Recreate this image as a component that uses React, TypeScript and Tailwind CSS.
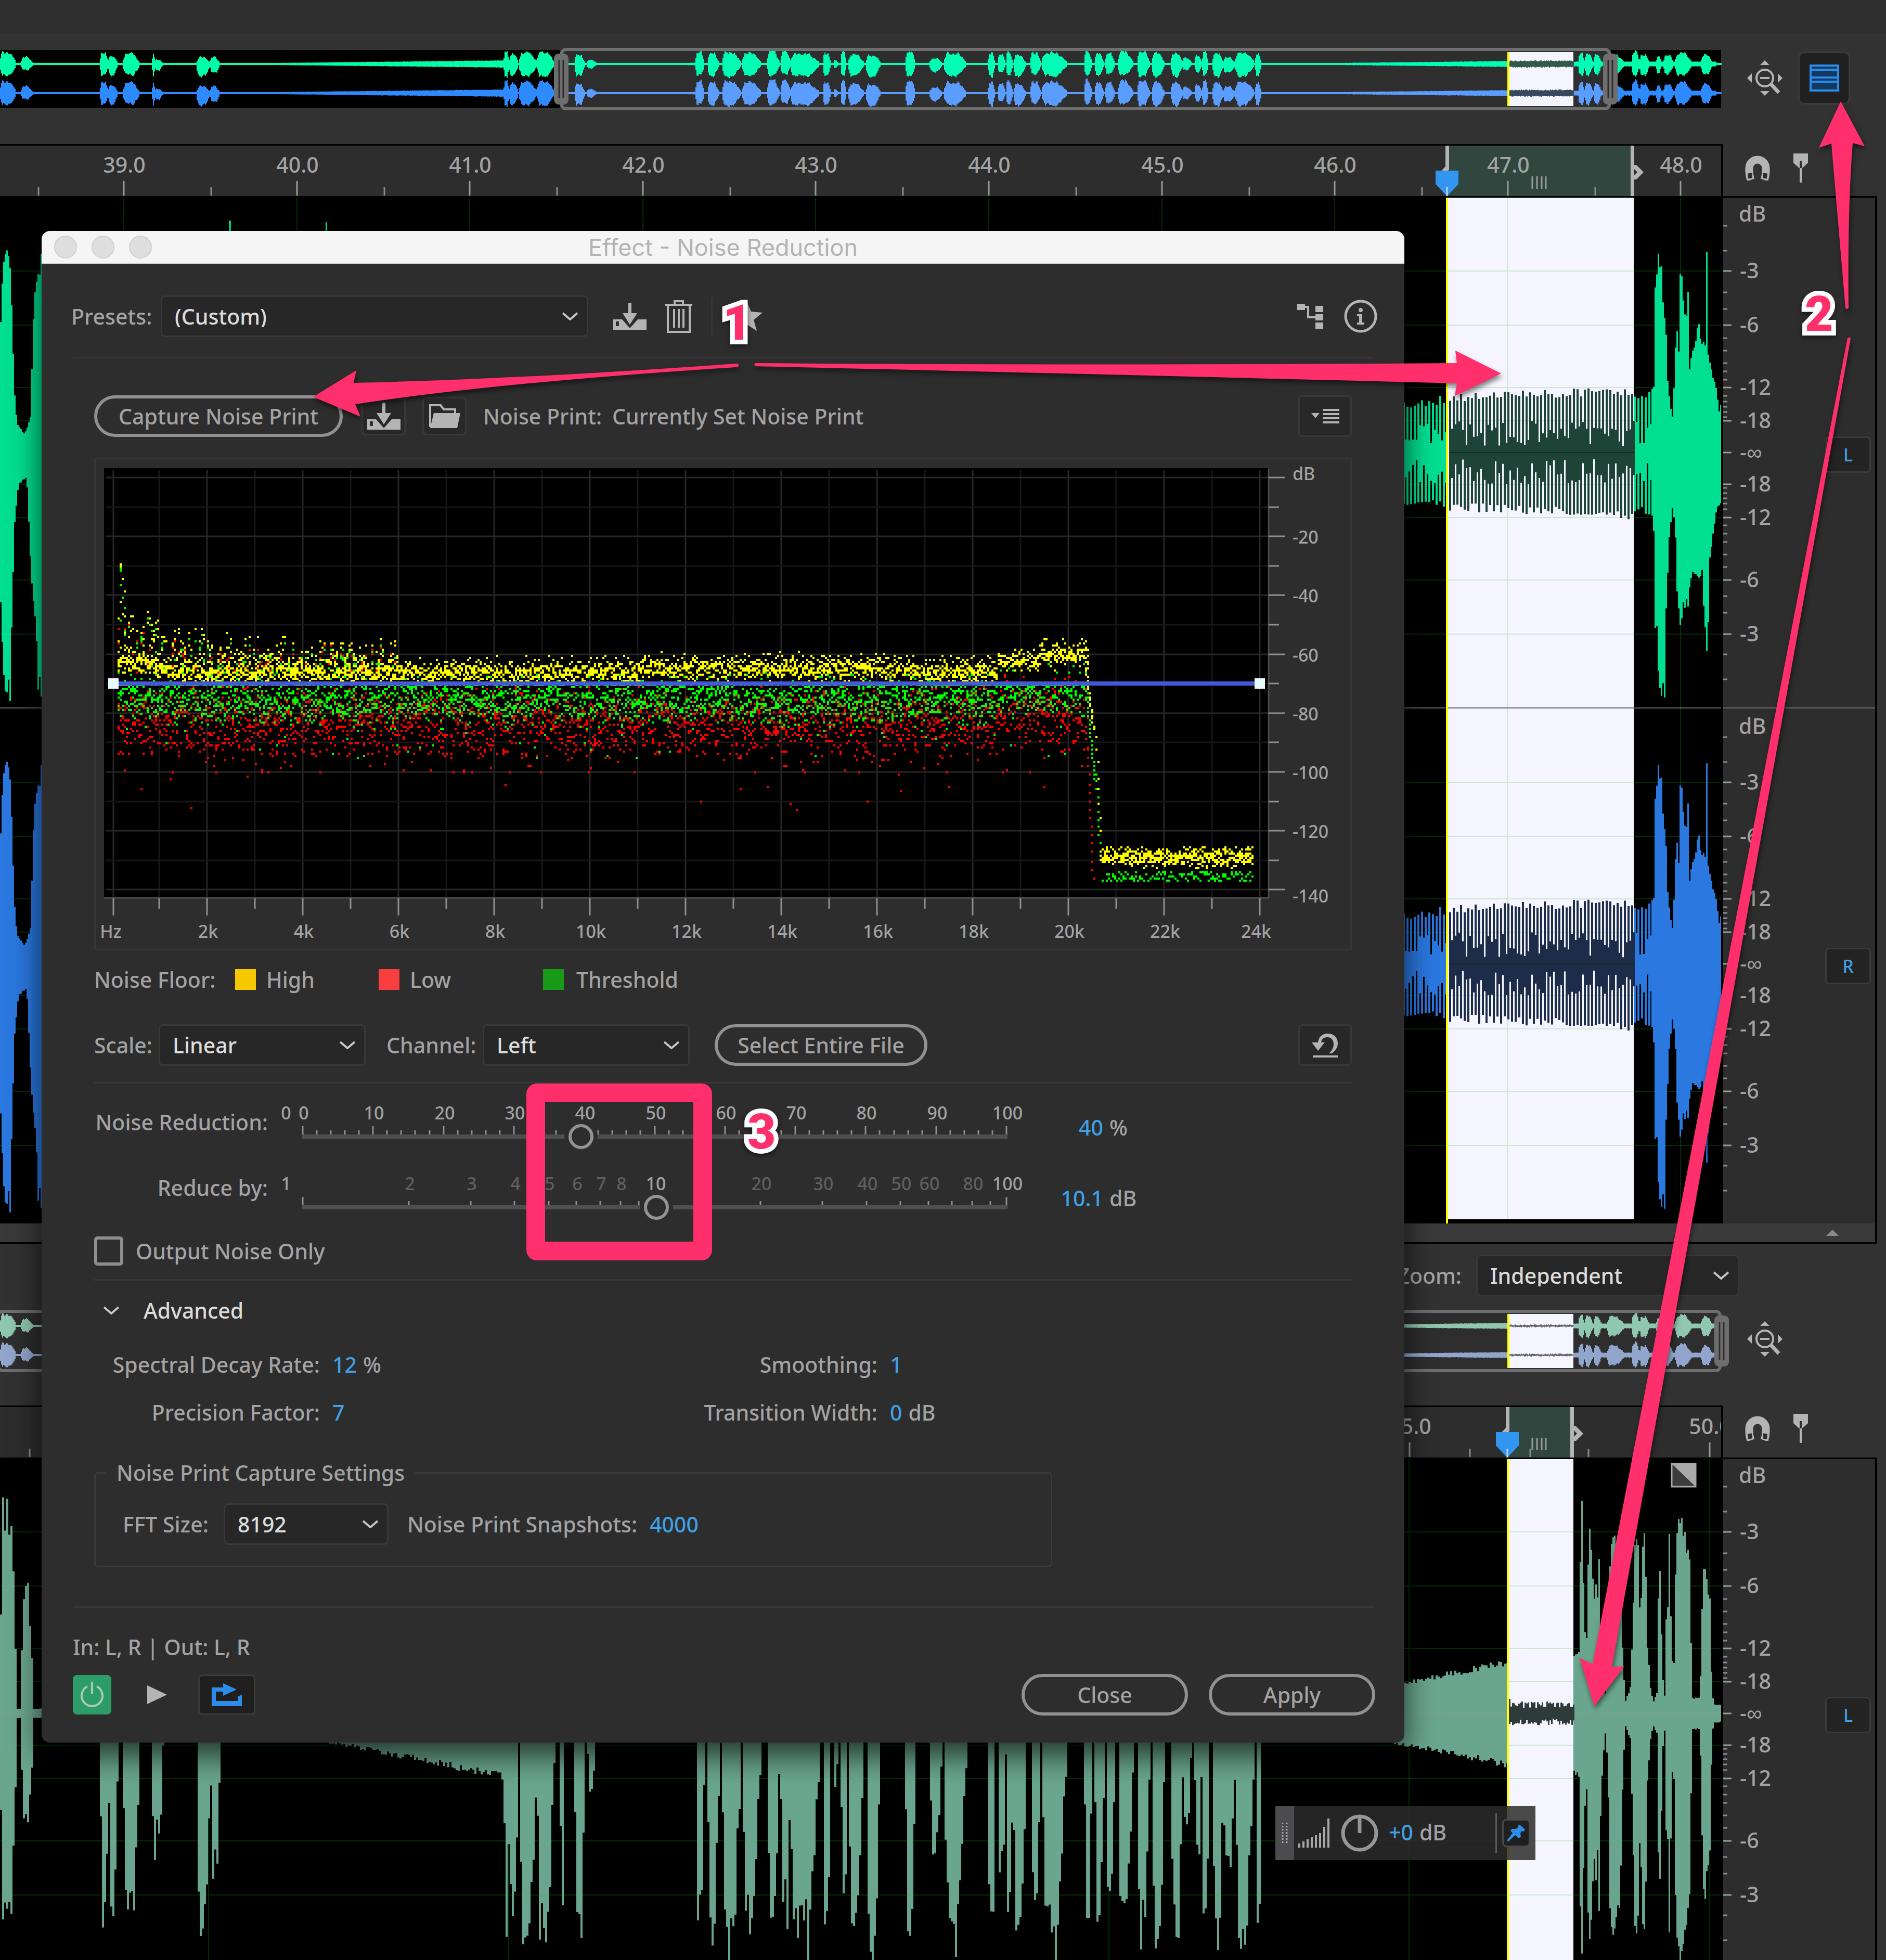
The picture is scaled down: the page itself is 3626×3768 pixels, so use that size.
// Audio editor workspace with the Noise Reduction effect window and the tutorial callouts on top.
import React, { useState } from "react";

type Burst = [number, number, number, number]; // start, end, up, down
type Column = [number, number, number, number]; // x, width, up, down
type Point = [number, number];

// Small seeded generator so the waveforms look the same on every render.
function createRandom(seed: number) {
  let s = seed;
  return () => {
    s = (s * 1664525 + 1013904223) % 4294967296;
    return s / 4294967296;
  };
}

// Phrases of the recording, in timeline pixels, with their peak level above and below the centre.
const bursts: Burst[] = [
  [0, 30, 0.95, 0.95], [40, 63, 0.55, 0.5], [192, 208, 0.9, 0.95], [208, 225, 0.65, 0.9], [236, 268, 0.85, 0.9],
  [292, 297, 0.85, 0.95], [297, 313, 0.35, 0.5], [378, 404, 0.55, 0.98], [404, 422, 0.55, 0.7], [968, 978, 1, 0.98],
  [978, 996, 0.8, 0.95], [998, 1032, 0.92, 0.95], [1032, 1065, 0.95, 0.98], [1076, 1083, 0.95, 0.95],
  [1104, 1124, 0.75, 0.98], [1128, 1146, 0.35, 0.35], [1337, 1353, 1, 0.95], [1360, 1382, 0.85, 0.95],
  [1388, 1424, 0.9, 0.98], [1427, 1462, 0.88, 0.88], [1475, 1498, 1, 0.9], [1500, 1520, 1, 0.85],
  [1519, 1575, 0.8, 0.98], [1582, 1596, 0.9, 0.95], [1602, 1611, 0.3, 0.3], [1616, 1627, 0.95, 0.98],
  [1631, 1660, 0.75, 0.9], [1665, 1692, 0.7, 0.98], [1740, 1759, 1, 0.95], [1787, 1811, 0.45, 0.6],
  [1815, 1857, 0.85, 0.95], [1899, 1912, 0.9, 0.98], [1918, 1933, 0.8, 0.7], [1934, 1946, 0.95, 0.9],
  [1948, 1972, 0.7, 0.95], [1981, 2000, 0.95, 0.8], [2003, 2050, 0.9, 0.98], [2084, 2098, 1, 0.95],
  [2104, 2122, 0.8, 0.85], [2125, 2142, 0.85, 0.85], [2149, 2178, 1, 0.9], [2186, 2210, 1, 0.98],
  [2214, 2238, 0.85, 0.98], [2251, 2273, 0.9, 0.98], [2273, 2290, 0.5, 0.5], [2296, 2310, 0.7, 0.6],
  [2311, 2323, 0.95, 0.95], [2331, 2351, 0.85, 0.98], [2351, 2375, 0.5, 0.7], [2375, 2411, 0.9, 0.95],
  [2413, 2424, 0.9, 0.95], [3034, 3046, 0.85, 0.98], [3046, 3062, 0.8, 0.85], [3064, 3078, 0.8, 0.9],
  [3090, 3122, 0.75, 0.8], [3137, 3152, 0.98, 0.98], [3152, 3170, 0.75, 0.9], [3184, 3194, 0.6, 0.8],
  [3198, 3216, 0.7, 0.75], [3220, 3252, 0.88, 0.95], [3270, 3292, 0.75, 0.8],
];

function levelAt(x: number): [number, number] {
  const hit = bursts.find(([a, b]) => x >= a && x < b);
  if (hit) {
    const t = (x - hit[0]) / (hit[1] - hit[0]);
    const taper = Math.min(1, 0.5 + t * 4, 0.2 + (1 - t) * 2);
    const sway = 0.88 + 0.12 * Math.sin(x * 0.47) * Math.sin(x * 0.19 + 1);
    const drift = 0.88 + 0.12 * Math.sin(x * 0.39 + 2) * Math.sin(x * 0.23);
    return [hit[2] * taper * sway * 1.06, hit[3] * taper * drift * 1.06];
  }
  if (x > 422 && x < 968) return [0.03 + ((x - 422) / 546) * 0.24, 0.03 + ((x - 422) / 546) * 0.24];
  if (x > 1240 && x < 1337) return [0.1 * ((x - 1240) / 97), 0.1 * ((x - 1240) / 97)];
  if (x > 2440 && x < 2900) return [0.02 + ((x - 2440) / 460) * 0.2, 0.02 + ((x - 2440) / 460) * 0.2];
  if (x >= 3025 && x < 3300) return [0.18, 0.18];
  return [0.02, 0.02];
}

function toPath(mid: number, columns: Column[]) {
  return columns
    .map(([x, w, up, down]) => `M${x} ${(mid - up).toFixed(1)}h${w}V${(mid + down).toFixed(1)}h${-w}z`)
    .join("");
}

function phraseColumns(from: number, to: number, scale: number, step: number, seed: number) {
  const rand = createRandom(seed);
  const columns: Column[] = [];
  for (let x = from; x < to; x += step) {
    const [up, down] = levelAt(x);
    const k = 0.86 + rand() * 0.14;
    const d = 0.86 + rand() * 0.14;
    columns.push([x, step, Math.max(2, up * k * scale), Math.max(2, down * d * scale)]);
  }
  return columns;
}

function flatColumns(from: number, to: number, level: number, spread: number, step: number, seed: number) {
  const rand = createRandom(seed);
  const columns: Column[] = [];
  for (let x = from; x < to; x += step) {
    columns.push([x, step, level + rand() * spread, level + rand() * spread]);
  }
  return columns;
}

// Steady hum: narrow teeth with a solid core between them.
function toothColumns(from: number, to: number, start: number, end: number, seed: number) {
  const rand = createRandom(seed);
  const columns: Column[] = [];
  for (let x = from; x < to; x += 7) {
    const level = start + ((end - start) * (x - from)) / (to - from);
    columns.push([x, 4, level + rand() * 18 - 9, level + rand() * 18 - 9]);
    columns.push([x + 4, 3, 12 + rand() * 50, 12 + rand() * 50]);
  }
  return columns;
}

function profileColumns(up: Point[], down: Point[], seed: number, step = 3) {
  const rand = createRandom(seed);
  const at = (pts: Point[], x: number) => {
    const i = pts.findIndex((p) => p[0] > x);
    if (i < 1) return pts[i === 0 ? 0 : pts.length - 1][1];
    const [x0, y0] = pts[i - 1];
    const [x1, y1] = pts[i];
    return y0 + ((y1 - y0) * (x - x0)) / (x1 - x0);
  };
  const columns: Column[] = [];
  for (let x = up[0][0]; x < up[up.length - 1][0]; x += step) {
    columns.push([x, step, at(up, x) * (0.94 + rand() * 0.1), at(down, x) * (0.94 + rand() * 0.1)]);
  }
  return columns;
}

const speechUp: Point[] = [
  [3175, 127], [3178, 130], [3180, 323], [3184, 330], [3186, 401], [3189, 388], [3194, 334], [3199, 253], [3202, 230],
  [3205, 144], [3209, 98], [3214, 72], [3217, 127], [3219, 127], [3221, 293], [3225, 184], [3227, 200], [3228, 325],
  [3231, 365], [3235, 311], [3239, 247], [3244, 302], [3247, 164], [3252, 202], [3258, 207], [3263, 257],
  [3269, 224], [3274, 207], [3278, 220], [3279, 371], [3281, 371], [3283, 184], [3289, 161], [3294, 144],
  [3300, 110], [3304, 78], [3309, 101],
];
const speechDown: Point[] = [
  [3175, 120], [3179, 160], [3181, 330], [3185, 345], [3187, 440], [3190, 470], [3199, 465], [3202, 300], [3207, 180],
  [3214, 110], [3219, 130], [3222, 250], [3229, 340], [3237, 290], [3244, 300], [3252, 230], [3262, 230],
  [3272, 240], [3278, 370], [3282, 380], [3286, 210], [3297, 120], [3309, 90],
];
const openingUp: Point[] = [
  [0, 260], [4, 365], [12, 405], [18, 372], [26, 120], [32, 55], [46, 35], [58, 70], [62, 250], [68, 330], [81, 380],
];
const openingDown: Point[] = [
  [0, 300], [6, 440], [18, 465], [26, 150], [34, 60], [50, 50], [58, 220], [66, 330], [72, 440], [81, 465],
];
const tailUp: Point[] = [
  [3025, 114], [3035, 119], [3037, 300], [3040, 402], [3043, 245], [3047, 128], [3050, 150], [3052, 297], [3055, 365],
  [3059, 301], [3063, 203], [3067, 259], [3070, 220], [3072, 371], [3075, 189], [3080, 95], [3085, 39], [3090, 105],
  [3095, 342], [3103, 343], [3114, 283], [3119, 95], [3124, 25], [3133, 49], [3138, 180], [3142, 339], [3147, 367],
  [3151, 198], [3156, 250], [3158, 418], [3162, 300], [3166, 133], [3172, 49], [3177, 22], [3184, 39], [3187, 226],
  [3190, 269], [3195, 77], [3199, 35], [3201, 170], [3205, 198], [3208, 334], [3211, 198], [3216, 30], [3219, 245],
  [3224, 398], [3233, 362], [3240, 329], [3247, 287], [3252, 30], [3267, 30], [3271, 198], [3275, 312], [3280, 255],
  [3286, 217], [3290, 39], [3294, 18], [3309, 16],
];
const tailDown: Point[] = tailUp.map(([x, v]) => [x, v > 150 ? Math.min(474, v * 1.25) : v]);

const overview = [
  { from: 0, to: 1077, seed: 3 },
  { from: 1077, to: 3084, seed: 5 },
  { from: 3084, to: 3309, seed: 7 },
];

function Overview({ muted }: { muted?: boolean }) {
  const frame = muted ? { x: -6, w: 3316, handle: 3296 } : { x: 1077, w: 2020, handle: 3082 };
  const green = muted ? ["#8fc7b0", "#8fc7b0", "#8fc7b0"] : ["#00ffaa", "#00ffb4", "#00ffaa"];
  const blue = muted ? ["#92a5cc", "#92a5cc", "#92a5cc"] : ["#2e8bff", "#5a9dff", "#2e8bff"];
  return (
    <svg className="block h-32 w-full overflow-visible" aria-hidden="true">
      <rect x="0" y="8" width="100%" height="112" fill="#000" />
      <rect x={frame.x} y="8" width={frame.w} height="112" fill="#2e2e2e" />
      {overview.map(({ from, to, seed }, i) => (
        <g key={from}>
          <path d={toPath(35, phraseColumns(from, to, 27, 2, seed))} fill={green[i]} />
          <path d={toPath(91, phraseColumns(from, to, 27, 2, seed))} fill={blue[i]} />
        </g>
      ))}
      <rect x="2900" y="12" width="125" height="104" fill="#f5f5ff" />
      <path d={toPath(35, flatColumns(2902, 3025, muted ? 1 : 5, 2, 2, 9))} fill={muted ? "#666" : "#325a4a"} />
      <path d={toPath(91, flatColumns(2902, 3025, muted ? 1 : 5, 2, 2, 11))} fill={muted ? "#666" : "#37475c"} />
      <rect x="2898" y="12" width="4" height="104" fill="#ffff00" />
      <rect x={frame.x + 3} y="7" width={frame.w - 6} height="114" rx="8" fill="none" stroke="#6e6e6e" strokeWidth="6" />
      {[muted ? -100 : 1065, frame.handle].map((x) => (
        <g key={x}>
          <rect x={x} y="15" width="28" height="98" rx="9" fill="#6e6e6e" />
          <path d={`M${x + 10} 27v74M${x + 18} 27v74`} stroke="#2e2e2e" strokeWidth="3" />
        </g>
      ))}
    </svg>
  );
}

type RulerProps = {
  labels: { x: number; text: string }[];
  minor: number[];
  start: number;
  end: number;
};

function Ruler({ labels, minor, start, end }: RulerProps) {
  const grip = 2946;
  return (
    <svg className="block h-[97px] w-full bg-[#2d2d2d]" aria-label="Timeline">
      <rect x={start} y="0" width={end - start} height="97" fill="#31463f" />
      {labels.map(({ x, text }) => (
        <g key={text}>
          <path d={`M${x} 68v28`} stroke="#9a9a9a" strokeWidth="3" />
          <text x={x + 1} y="52" textAnchor="middle" fontSize="41" fill="#a3a3a3">{text}</text>
        </g>
      ))}
      {minor.map((x) => <path key={x} d={`M${x} 80v16`} stroke="#8a8a8a" strokeWidth="3" />)}
      <path d={[0, 9, 18, 26].map((d) => `M${grip + d} 59v24`).join("")} stroke="#9a9a9a" strokeWidth="3" />
      <path d={`M${start - 3} 0h7v46l-8 8h-12l13-14z`} fill="#b4b4b4" />
      <path d={`M${end - 6} 0h7v37h4l14 14-14 14h-4v32h-7z`} fill="#b4b4b4" />
      <path d={`M${end + 1} 45l6 6-6 6z`} fill="#2d2d2d" />
      <path d={`M${start - 22} 48h44v26l-20 21h-4l-20-21z`} fill="#3296f0" />
      <path d={`M${start} 80v17`} stroke="#c4d4e4" strokeWidth="3" />
    </svg>
  );
}

const levels = [
  { label: "-3", offset: 349 },
  { label: "-6", offset: 245 },
  { label: "-12", offset: 125 },
  { label: "-18", offset: 61 },
];
const minorLevels = [436, 388, 308, 276, 220, 196, 172, 156, 140, 109, 98, 88, 78, 68];

function Decibels({ mid, top }: { mid: number; top: number }) {
  const sides = [-1, 1];
  return (
    <g>
      <text x="30" y={top + 46} fontSize="41" fill="#a3a3a3">dB</text>
      <path d={`M0 ${mid}h16`} stroke="#9a9a9a" strokeWidth="3" />
      <text x="32" y={mid + 14} fontSize="41" fill="#a3a3a3">-∞</text>
      {sides.map((side) => (
        <g key={side}>
          {levels.map(({ label, offset }) => (
            <g key={label}>
              <path d={`M0 ${mid + side * offset}h16`} stroke="#9a9a9a" strokeWidth="3" />
              <text x="32" y={mid + side * offset + 14} fontSize="41" fill="#a3a3a3">{label}</text>
            </g>
          ))}
          <path d={minorLevels.map((o) => `M0 ${mid + side * o}h8`).join("")} stroke="#8a8a8a" strokeWidth="3" />
        </g>
      ))}
    </g>
  );
}

// Horizontal level guides and vertical time guides, recoloured where they cross the selection.
function Guides({ mids, xs, height, sel }: { mids: number[]; xs: number[]; height: number; sel: [number, number] }) {
  const ys = mids.flatMap((m) => levels.flatMap(({ offset }) => [m - offset, m + offset]));
  return (
    <g strokeWidth="2">
      <path d={ys.map((y) => `M0 ${y}H3309`).join("")} stroke="#062c06" />
      <path d={xs.map((x) => `M${x} 0V${height}`).join("")} stroke="#062c06" />
      <path d={ys.map((y) => `M${sel[0]} ${y}H${sel[1]}`).join("")} stroke="#cfe6d2" />
      <path d={xs.filter((x) => x > sel[0] && x < sel[1]).map((x) => `M${x} 0V${height}`).join("")} stroke="#cfe6d2" />
    </g>
  );
}

function StereoWave({ times }: { times: number[] }) {
  const channels = [
    { mid: 490, color: "#00df92", selected: "#1e4438" },
    { mid: 1473, color: "#2a78e0", selected: "#1d2c48" },
  ];
  return (
    <svg className="block h-[1972px] w-full bg-black" aria-label="Waveform">
      <rect x="2784" y="0" width="357" height="1964" fill="#f5f5ff" />
      <Guides mids={[490, 1473]} xs={times} height={1964} sel={[2784, 3141]} />
      {channels.map(({ mid, color, selected }) => (
        <g key={mid}>
          <path
            fill={color}
            d={
              toPath(mid, profileColumns(openingUp, openingDown, 21)) +
              toPath(mid, [[440, 4, 446, 300], [626, 3, 443, 300]]) +
              toPath(mid, toothColumns(2690, 2780, 92, 102, 23)) +
              toPath(mid, toothColumns(3141, 3175, 112, 116, 25)) +
              toPath(mid, profileColumns(speechUp, speechDown, 27))
            }
          />
          <path fill={selected} d={toPath(mid, toothColumns(2786, 3138, 104, 120, 29))} />
          <path d={`M2786 ${mid}H3141`} stroke="#162a24" strokeWidth="2" />
        </g>
      ))}
      <path d="M0 981H3309" stroke="#6a6a6a" strokeWidth="2" />
      <rect x="2780" y="0" width="4" height="1972" fill="#ffff00" />
    </svg>
  );
}

function FileWave() {
  return (
    <svg className="block h-[963px] w-full bg-black" aria-label="Full file waveform">
      <rect x="2900" y="0" width="125" height="963" fill="#f5f5ff" />
      <Guides mids={[489]} xs={[401, 978, 1555, 2132, 2709, 3286]} height={963} sel={[2900, 3025]} />
      <path fill="#6aa68f" d={toPath(489, phraseColumns(0, 2898, 480, 4, 31)) + toPath(489, profileColumns(tailUp, tailDown, 33))} />
      <path d="M0 489H3309" stroke="#84a585" strokeWidth="2" opacity="0.6" />
      <path fill="#2e3b38" d={toPath(489, [[2901, 3, 28, 20], ...flatColumns(2904, 3025, 10, 13, 3, 35)])} />
      <rect x="2897" y="0" width="4" height="963" fill="#ffff00" />
      <rect x="3214" y="9" width="46" height="44" fill="#3c3c3c" stroke="#a8a8a8" strokeWidth="3" />
      <path d="M3214 9h46v44z" fill="#a8a8a8" />
    </svg>
  );
}

function ZoomIcon() {
  return (
    <svg className="h-[72px] w-[72px]" viewBox="-36 -36 72 72" fill="none" stroke="#b4b4b4">
      <circle cx="0" cy="0" r="16" strokeWidth="4" />
      <path d="M-9 0H9" strokeWidth="4" />
      <path d="M12 12L27 28" strokeWidth="7" />
      <path d="M-9-25L0-34 9-25zM-9 25L0 34 9 25zM-25-9L-34 0-25 9zM25-9L34 0 25 9z" fill="#b4b4b4" stroke="none" />
    </svg>
  );
}

function MagnetIcon() {
  return (
    <svg className="h-12 w-12" viewBox="0 0 48 48" fill="none">
      <path d="M11 47C7 36 8 30 8 24A16 16 0 0 1 40 24C40 30 41 36 37 47" stroke="#b4b4b4" strokeWidth="15" />
      <path d="M10 44L9 34M38 44l1-10" stroke="#2f2f2f" strokeWidth="8" />
    </svg>
  );
}

function MarkerIcon() {
  return (
    <svg className="h-14 w-7" viewBox="0 0 28 56">
      <path d="M0 0h28v18L17 28h-6L0 18z" fill="#b4b4b4" />
      <path d="M14 14v14" stroke="#2f2f2f" strokeWidth="4" />
      <path d="M14 28v28" stroke="#b4b4b4" strokeWidth="4" />
    </svg>
  );
}

function SaveIcon() {
  return (
    <svg className="h-[52px] w-16" viewBox="0 0 64 52" fill="#b4b4b4">
      <path d="M0 32h17l15 17 15-17h17v20H0z" />
      <path d="M29 0h6v20h11L32 42 18 20h11z" stroke="#2d2d2d" strokeWidth="2" paintOrder="stroke" />
      <rect x="5" y="36" width="6" height="9" fill="#2d2d2d" />
    </svg>
  );
}

function Chevron() {
  return (
    <svg className="h-4 w-[30px]" viewBox="0 0 30 16" fill="none" stroke="#c8c8c8" strokeWidth="4">
      <path d="M1 2l14 12L29 2" />
    </svg>
  );
}

function Select({ id, value, className }: { id: string; value: string; className: string }) {
  return (
    <div className={`relative h-20 ${className}`}>
      <select id={id} className="h-full w-full appearance-none rounded-lg border-3 border-[#383838] bg-[#272727] pl-6 text-[#dcdcdc] outline-none">
        <option>{value}</option>
      </select>
      <span className="pointer-events-none absolute inset-y-0 right-5 flex items-center">
        <Chevron />
      </span>
    </div>
  );
}

function ChannelButton({ name }: { name: string }) {
  return (
    <button className="h-[70px] w-[88px] rounded-lg border-3 border-[#3a3a3a] bg-[#232323] text-[34px] text-[#3fa0e6]">
      {name}
    </button>
  );
}

const frequencyX = (k: number) => (k === 0 ? 34 : 30 + k * 92);

// Noise print scatter: peaks, threshold and low floor per frequency bin.
const plot = (() => {
  const rand = createRandom(77);
  const gauss = () => rand() + rand() + rand() - 1.5;
  const dots = { high: "", threshold: "", low: "" };
  const put = (kind: keyof typeof dots, x: number, db: number) => {
    const y = 36 + Math.round((-db * 5.66) / 4) * 4;
    if (y < 810) dots[kind] += `M${x} ${y}h4v4h-4z`;
  };
  for (let x = 42; x < 2226; x += 4) {
    const f = (x - 30) / 92;
    if (f < 20.4) {
      let top = -66;
      if (f < 1.8) top = -61.5 - f * 2.5;
      else if (f > 11 && f < 16.8) top = -64.5;
      else if (f > 18.5 && f <= 19.4) top = -62;
      else if (f > 19.4) top = -60;
      for (let i = 0; i < 5; i++) put("high", x, Math.max(-69, top + gauss() * 3.4));
      if (rand() < 0.6) put("high", x, top + 1 + rand() * 5);
      const lift = f > 18.5 ? 3 : 0;
      for (let i = 0; i < 6; i++) put("threshold", x, Math.min(-70, -75 + lift + gauss() * 8));
      if (rand() < 0.25) put("threshold", x, -66 + lift - rand() * 3);
      for (let i = 0; i < 5; i++) put("low", x, -82 + lift + gauss() * 10);
      if (rand() < 0.4) put("low", x, -88 - rand() * 7);
      if (rand() < 0.12) put("low", x, -95 - rand() * 5);
      if (rand() < 0.03) put("low", x, -99 - rand() * 14);
      if (rand() < 0.08) put("threshold", x, -84 - rand() * 12);
      if (f < 6 && rand() < 0.75) {
        const peak = -55 + 18 * Math.exp(-f / 1.4) - rand() * 9;
        put("high", x, peak);
        if (rand() < 0.4) put("threshold", x, peak - 2);
        if (rand() < 0.3) put("low", x, peak - 4);
        for (let i = 0; i < 4; i++) {
          const db = peak - rand() * (66 + peak);
          put(rand() < 0.5 ? "high" : rand() < 0.6 ? "threshold" : "low", x, db);
        }
      }
    } else if (f > 20.62) {
      for (let i = 0; i < 6; i++) put("high", x, -128.5 + gauss() * 3);
      for (let i = 0; i < 2; i++) put("threshold", x, -133.5 - rand() * 4);
    }
  }
  // Steep low-pass edge just above 20 kHz.
  for (let i = 0; i < 20; i++) put("high", 1902 + Math.round(i / 5) * 4, -64 - i * 1.1);
  for (let i = 0; i < 8; i++) put("high", 1922 + Math.round(i / 4) * 4, -86 - i * 4.6 - rand() * 2);
  for (let i = 0; i < 18; i++) put("threshold", 1906 + Math.round(i / 5) * 4, -78 - i * 1.4);
  for (let i = 0; i < 10; i++) put("threshold", 1922 + Math.round(i / 6) * 4, -100 - i * 2.6);
  for (let i = 0; i < 16; i++) put("low", 1906 + Math.round(i / 6) * 4, -92 - i * 2.9);
  for (let db = -34; db > -50; db -= 2) put(db % 4 ? "high" : "threshold", 46 + (db % 3) * -4, db);
  dots.high += "M46 200h4v8h-4z";
  dots.threshold += "M46 208h4v8h-4z";
  return dots;
})();

function NoisePlot() {
  const khz = Array.from({ length: 25 }, (_, i) => i);
  const dbs = Array.from({ length: 15 }, (_, i) => i);
  const py = (i: number) => 35 + Math.round(i * 56.6);
  return (
    <svg className="block h-[941px] w-full" role="img" aria-label="Noise print graph">
      <rect x="16" y="17" width="2238" height="827" fill="#000" />
      {khz.map((k) => <path key={k} d={`M${frequencyX(k)} 21V843`} stroke={k % 2 ? "#171717" : "#272727"} strokeWidth="3" />)}
      {dbs.map((i) => <path key={i} d={`M20 ${py(i)}H2254`} stroke={i % 2 ? "#171717" : "#272727"} strokeWidth="3" />)}
      <path d={plot.low} fill="#f00" />
      <path d={plot.threshold} fill="#0f0" />
      <path d={plot.high} fill="#ff0" />
      <path d="M16 843H2255V19" fill="none" stroke="#4a4a4a" strokeWidth="3" />
      {khz.map((k) => <path key={k} d={`M${frequencyX(k)} 844v${k % 2 ? 20 : 33}`} stroke="#8f8f8f" strokeWidth="3" />)}
      {dbs.map((i) => <path key={i} d={`M2255 ${py(i)}h${i % 2 ? 20 : 32}`} stroke="#8f8f8f" strokeWidth="3" />)}
      {khz.filter((k) => k % 2 === 0).map((k) => (
        <text key={k} x={k === 0 ? 29 : k === 24 ? frequencyX(k) - 7 : frequencyX(k) + 2} y="920" textAnchor="middle" fontSize="34" fill="#a3a3a3">
          {k === 0 ? "Hz" : `${k}k`}
        </text>
      ))}
      {dbs.filter((i) => i % 2 === 0).map((i) => (
        <text key={i} x="2301" y={i === 0 ? 40 : i === 14 ? py(i) + 25 : py(i) + 14} fontSize="34" fill="#a3a3a3">
          {i === 0 ? "dB" : `-${i * 10}`}
        </text>
      ))}
      <path d="M34 431H2238" stroke="#4558dc" strokeWidth="8" />
      <rect x="24" y="421" width="20" height="20" fill="#e8fbff" />
      <rect x="2228" y="421" width="20" height="20" fill="#e8fbff" />
    </svg>
  );
}

type ScaleMark = { at: number; label?: string; dim?: boolean; major?: boolean };

const percentMarks: ScaleMark[] = Array.from({ length: 51 }, (_, i) =>
  i % 5 === 0 ? { at: i * 2, label: String(i * 2), major: true } : { at: i * 2 },
);

const gainMarks: ScaleMark[] = [1, 2, 3, 4, 5, 6, 7, 8, 9, 10, 20, 30, 40, 50, 60, 70, 80, 90, 100].map((v) => ({
  at: Math.log10(v) * 50,
  label: [1, 9, 70, 90].includes(v) ? undefined : String(v),
  dim: v !== 10 && v !== 100,
  major: v === 1 || v === 100,
}));

type SliderProps = {
  id: string;
  label: string;
  labelClass: string;
  lead: string;
  marks: ScaleMark[];
  initial: number;
  unit: string;
  format: (v: number) => string;
};

function Slider({ id, label, labelClass, lead, marks, initial, unit, format }: SliderProps) {
  const [value, setValue] = useState(initial);
  return (
    <div className="flex h-[92px] items-center">
      <label htmlFor={id} className={`w-[334px] shrink-0 text-right ${labelClass}`}>{label}</label>
      <div className="relative ml-6 h-full w-[1460px] shrink-0">
        <svg className="block h-full w-full overflow-visible">
          <text x="11" y="31" textAnchor="middle" fontSize="34" fill="#a3a3a3">{lead}</text>
          <path d="M42 64H1398" stroke="#4f4f4f" strokeWidth="8" />
          {marks.map(({ at, label: text, dim, major }) => (
            <g key={at}>
              <path d={`M${43 + Math.round(at * 13.53)} ${major ? 44 : 52}V60`} stroke="#8f8f8f" strokeWidth="3" />
              {text && (
                <text x={45 + Math.round(at * 13.53)} y="31" textAnchor="middle" fontSize="34" fill={dim ? "#5f5f5f" : "#a3a3a3"}>
                  {text}
                </text>
              )}
            </g>
          ))}
        </svg>
        <input
          id={id}
          type="range"
          min="0"
          max="100"
          step="0.1"
          value={value}
          onChange={(e) => setValue(Number(e.target.value))}
          className="absolute top-[40px] left-5 h-12 w-[1400px] appearance-none bg-transparent [&::-webkit-slider-thumb]:h-12 [&::-webkit-slider-thumb]:w-12 [&::-webkit-slider-thumb]:appearance-none [&::-webkit-slider-thumb]:rounded-full [&::-webkit-slider-thumb]:border-[6px] [&::-webkit-slider-thumb]:border-[#939393] [&::-webkit-slider-thumb]:bg-[#2d2d2d] [&::-webkit-slider-thumb]:shadow-[0_0_0_8px_#2d2d2d]"
        />
      </div>
      <output htmlFor={id} className="flex shrink-0 gap-3">
        <span className="w-[122px] text-right text-[#3fa0e6]">{format(value)}</span>
        {unit}
      </output>
    </div>
  );
}

function Param({ label, value, unit, className }: { label: string; value: string; unit?: string; className: string }) {
  return (
    <div className="flex h-14 items-center">
      <span className={`text-right ${className}`}>{label}</span>
      <span className="ml-6 text-[#3fa0e6]">{value}</span>
      {unit && <span className="ml-3">{unit}</span>}
    </div>
  );
}

const pill = "flex h-20 items-center justify-center rounded-full border-[6px] border-[#919191]";
const iconButton = "flex items-center justify-center rounded-lg border-3 border-[#383838] bg-[#282828]";

function NoiseReductionDialog() {
  return (
    <section
      role="dialog"
      aria-label="Noise Reduction"
      className="absolute top-[444px] left-20 w-[2620px] overflow-hidden rounded-2xl bg-[#2d2d2d] shadow-[0_24px_60px_rgba(0,0,0,0.7)]"
    >
      <header className="relative flex h-16 items-center justify-center border-b-2 border-[#cfcfcf] bg-[#f5f5f5] font-['Inter',sans-serif] text-[45px] font-normal text-[#b3b3b3]">
        <div className="absolute left-6 flex gap-7">
          <span className="h-11 w-11 rounded-full border-2 border-[#d0d0d0] bg-[#dedede]" />
          <span className="h-11 w-11 rounded-full border-2 border-[#d0d0d0] bg-[#dedede]" />
          <span className="h-11 w-11 rounded-full border-2 border-[#d0d0d0] bg-[#dedede]" />
        </div>
        <h1>Effect - Noise Reduction</h1>
      </header>

      <div className="px-[60px] pt-[60px] pb-[52px]">
        <div className="flex h-20 items-center">
          <label htmlFor="presets" className="ml-[-3px] w-[172px]">Presets:</label>
          <Select id="presets" value="(Custom)" className="w-[822px]" />
          <button aria-label="Save preset" className="ml-12"><SaveIcon /></button>
          <button aria-label="Delete preset" className="ml-9">
            <svg className="h-16 w-[52px]" viewBox="0 0 52 64" fill="none" stroke="#b4b4b4" strokeWidth="4">
              <path d="M18 8V3h16v5M0 10h52M5 12v50h42V12M17 18v36M26 18v36M35 18v36" />
            </svg>
          </button>
          <span className="ml-9 h-[72px] w-[3px] bg-[#363636]" />
          <button aria-label="Favourite" className="ml-9">
            <svg className="h-[56px] w-[60px]" viewBox="0 0 60 56" fill="#b4b4b4">
              <path d="M30 0l8 19 22 2-17 14 6 21-19-12-19 12 6-21L0 21l22-2z" />
            </svg>
          </button>
          <button aria-label="Channel map" className="ml-auto">
            <svg className="h-12 w-[50px]" viewBox="0 0 50 48" fill="#b4b4b4">
              <path d="M0 0h15v12H0zM35 4h15v12H35zM35 20h15v12H35zM35 36h15v12H35z" />
              <path d="M12 6h9v20h16" fill="none" stroke="#b4b4b4" strokeWidth="4" />
            </svg>
          </button>
          <button aria-label="Info" className="mr-[-8px] ml-10">
            <svg className="h-16 w-16" viewBox="0 0 64 64" fill="#b4b4b4">
              <circle cx="32" cy="32" r="29" fill="none" stroke="#b4b4b4" strokeWidth="5" />
              <circle cx="32" cy="20" r="4" />
              <path d="M25 28h10v16h4v4H25v-4h4V32h-4z" />
            </svg>
          </button>
        </div>
        <hr className="mt-[38px] border-t-3 border-[#373737]" />

        <div className="px-[41px]">
          <div className="mt-[71px] flex h-20 items-center">
            <button className={`w-[478px] ${pill}`}>Capture Noise Print</button>
            <button aria-label="Save noise print" className={`ml-9 h-[74px] w-[85px] ${iconButton}`}><SaveIcon /></button>
            <button aria-label="Load noise print" className={`ml-8 h-[74px] w-[85px] ${iconButton}`}>
              <svg className="h-[46px] w-[60px]" viewBox="0 0 60 46">
                <path d="M2 44V2h20l6 8h22v8" fill="none" stroke="#b4b4b4" strokeWidth="4" />
                <path d="M9 17h51l-6 29H2z" fill="#b4b4b4" />
              </svg>
            </button>
            <span className="ml-8">Noise Print:</span>
            <span className="ml-5">Currently Set Noise Print</span>
            <button aria-label="Panel menu" className={`ml-auto h-20 w-[103px] ${iconButton}`}>
              <svg className="h-7 w-[54px]" viewBox="0 0 54 28" fill="#b4b4b4">
                <path d="M0 8h16l-8 10zM22 0h32v4H22zM22 8h32v4H22zM22 16h32v4H22zM22 24h32v4H22z" />
              </svg>
            </button>
          </div>

          <div className="mt-10 border-3 border-[#363636]">
            <NoisePlot />
          </div>

          <div className="mt-8 flex h-12 items-center">
            <span className="w-[271px]">Noise Floor:</span>
            <span className="mr-5 h-10 w-10 bg-[#f5c800]" />
            <span className="w-[216px]">High</span>
            <span className="mr-5 h-10 w-10 bg-[#f83e3e]" />
            <span className="w-64">Low</span>
            <span className="mr-6 h-10 w-10 bg-[#189a18]" />
            <span>Threshold</span>
          </div>

          <div className="mt-[62px] flex h-20 items-center">
            <label htmlFor="scale" className="w-[124px]">Scale:</label>
            <Select id="scale" value="Linear" className="w-[398px]" />
            <label htmlFor="channel" className="ml-10 w-[185px]">Channel:</label>
            <Select id="channel" value="Left" className="w-[398px]" />
            <button className={`ml-12 w-[409px] ${pill}`}>Select Entire File</button>
            <button aria-label="Reset" className={`ml-auto h-20 w-[103px] ${iconButton}`}>
              <svg className="h-[50px] w-[52px]" viewBox="0 0 52 50" fill="#b4b4b4">
                <path d="M0 20h25L12 36z" />
                <path d="M12 22C12 8 22 3 31 3c13 0 19 9 19 19 0 8-5 14-11 19h-6c6-5 9-11 9-18 0-8-5-13-12-13-8 0-12 4-12 12z" />
                <path d="M2 45h48v4H2z" />
              </svg>
            </button>
          </div>
          <hr className="mt-[31px] border-t-3 border-[#373737]" />

          <div className="mt-[38px] flex flex-col gap-11">
            <Slider id="reduction" label="Noise Reduction:" labelClass="pb-5" lead="0" marks={percentMarks} initial={39.5} unit="%" format={(v) => String(Math.round(v))} />
            <Slider id="reduce-by" label="Reduce by:" labelClass="pb-10" lead="1" marks={gainMarks} initial={50.2} unit="dB" format={(v) => (10 ** (v / 50)).toFixed(1)} />
          </div>

          <label className="mt-7 flex h-14 items-center gap-6">
            <input type="checkbox" className="h-14 w-14 appearance-none rounded-md border-[6px] border-[#8e8e8e]" />
            Output Noise Only
          </label>
          <hr className="mt-[26px] border-t-3 border-[#373737]" />

          <button className="mt-[33px] ml-[18px] flex h-12 items-center gap-[47px] text-[#dcdcdc]">
            <Chevron />
            Advanced
          </button>
          <div className="mt-[52px] flex">
            <div className="flex w-[1072px] flex-col gap-9">
              <Param label="Spectral Decay Rate:" value="12" unit="%" className="w-[434px]" />
              <Param label="Precision Factor:" value="7" className="w-[434px]" />
            </div>
            <div className="flex flex-col gap-9">
              <Param label="Smoothing:" value="1" className="w-[434px]" />
              <Param label="Transition Width:" value="0" unit="dB" className="w-[434px]" />
            </div>
          </div>

          <fieldset className="mt-[60px] w-[1842px] rounded-lg border-3 border-[#3a3a3a] pt-8 pb-[41px] pl-[52px]">
            <legend className="-ml-8 h-14 px-5 leading-[56px]">Noise Print Capture Settings</legend>
            <div className="flex h-[78px] items-center">
              <label htmlFor="fft" className="w-[194px]">FFT Size:</label>
              <Select id="fft" value="8192" className="w-[317px]" />
              <span className="ml-9">Noise Print Snapshots:</span>
              <span className="ml-6 text-[#3fa0e6]">4000</span>
            </div>
          </fieldset>
        </div>

        <hr className="mt-[75px] border-t-3 border-[#373737]" />
        <p className="mt-[51px] h-12 leading-[48px]">In: L, R | Out: L, R</p>
        <div className="mt-7 flex h-20 items-center">
          <button aria-label="Power" className="flex h-[76px] w-[74px] items-center justify-center rounded-lg bg-[#2d9d68]">
            <svg className="h-[50px] w-[46px]" viewBox="0 0 46 50" fill="none" stroke="#a9c9b8" strokeWidth="4">
              <path d="M14 9a20 20 0 1 0 18 0M23 0v24" />
            </svg>
          </button>
          <button aria-label="Play" className="ml-[69px]">
            <svg className="h-9 w-[38px]" viewBox="0 0 38 36"><path d="M0 0l38 18L0 36z" fill="#b4b4b4" /></svg>
          </button>
          <button aria-label="Loop" className="ml-[60px] flex h-[78px] w-[110px] items-center justify-center rounded-lg border-3 border-[#3a3a3a] bg-[#1f1f1f]">
            <svg className="h-11 w-[58px]" viewBox="0 0 58 44" fill="#2d8ceb">
              <path d="M0 8h22V0l26 12-26 12v-8H8v18h42V26l8-4v22H0z" />
            </svg>
          </button>
          <button className={`ml-auto w-80 ${pill}`}>Close</button>
          <button className={`ml-10 mr-[-4px] w-80 ${pill}`}>Apply</button>
        </div>
      </div>
    </section>
  );
}

function GainHud() {
  return (
    <div className="absolute top-[3472px] left-[2452px] flex h-[104px] w-[500px] items-center bg-[#2b2b2b]/85">
      <span className="flex h-full w-9 items-center justify-center bg-[#4c4c4e]">
        <svg className="h-10 w-3" viewBox="0 0 12 40" stroke="#a8a8a8" strokeWidth="3" strokeDasharray="3 3">
          <path d="M2 0v40M10 0v40" />
        </svg>
      </span>
      <svg className="ml-2 h-14 w-[62px]" viewBox="0 0 62 56" stroke="#a8a8a8" strokeWidth="4">
        <path d="M2 56v-8M10 56V44M18 56V40M26 56V36M34 56V32M42 56V28M50 56V16M58 56V0" />
      </svg>
      <svg className="ml-5 h-[72px] w-[72px]" viewBox="0 0 72 72" fill="none" stroke="#969696" strokeWidth="7">
        <circle cx="36" cy="36" r="32" />
        <path d="M36 4v32" />
      </svg>
      <span className="ml-5 pb-1 text-[#3fa0e6]">+0</span>
      <span className="ml-3 pb-1">dB</span>
      <span className="ml-auto h-[76px] w-[3px] bg-[#5a5a5a]" />
      <button aria-label="Pin" className="mx-[10px] flex h-[54px] w-[54px] items-center justify-center rounded-lg border-3 border-[#484848] bg-[#1f1f1f]">
        <svg className="h-8 w-[34px]" viewBox="0 0 34 32" fill="#2d8ceb">
          <path d="M20 2l4-2 10 9-2 4-4-1-3 4 1 7-4 3-7-6L2 32H0v-3l10-13-4-5 3-3 7 0 5-3z" />
        </svg>
      </button>
    </div>
  );
}

// Callout arrows and highlight frame drawn above everything else.
function Callouts() {
  const digit =
    "absolute font-['Roboto',sans-serif] text-[94px] leading-none font-black text-[#ff2f6b] [-webkit-text-stroke:18px_white] [paint-order:stroke_fill] drop-shadow-[0_4px_4px_rgba(0,0,0,0.5)]";
  return (
    <>
      <svg className="pointer-events-none absolute top-0 left-0 h-[3768px] w-[3626px] drop-shadow-[2px_6px_5px_rgba(0,0,0,0.5)]" fill="#ff2f6b">
        <path d="M602 763L685 712 680 736Q1000 729 1416 699 1421 699 1420 704 1418 706 1414 706 960 735 683 777L693 801z" />
        <path d="M1452 698Q2100 703 2801 698L2798 674 2886 718 2797 761 2801 737Q2228 722 1452 704 1449 701 1452 698z" />
        <path d="M3539 195L3585 281 3562 275Q3552 400 3554 592 3551 596 3548 592L3521 276 3497 284z" />
        <path d="M3558 651L3099 3205 3123 3203 3065 3280 3037 3187 3062 3199 3552 650Q3556 647 3558 651z" />
      </svg>
      <div className="pointer-events-none absolute top-[2083px] left-[1012px] h-[340px] w-[357px] rounded-[20px] border-[36px] border-[#ff2f6b]" />
      <span className={`top-[574px] left-[1390px] ${digit}`}>1</span>
      <span className={`top-[557px] left-[3470px] ${digit}`}>2</span>
      <span className={`top-[2129px] left-[1437px] ${digit}`}>3</span>
    </>
  );
}

export default function App() {
  const times = Array.from({ length: 10 }, (_, i) => 238 + Math.round(i * 332.6));
  const timeLabels = times.map((x, i) => ({ x, text: `${39 + i}.0` }));
  const fileLabels = [
    { x: 2710, text: "45.0" },
    { x: 3287, text: "50.0" },
  ];

  return (
    <main className="relative min-h-screen w-full overflow-hidden bg-[#323232] font-['Noto_Sans',sans-serif] text-[41px] leading-none font-medium text-[#a3a3a3]">
      <div className="h-[63px] bg-[#2f2f2f]" />

      <div className="mt-[25px] flex items-center">
        <div className="min-w-0 flex-1"><Overview /></div>
        <div className="flex w-[317px] items-center pb-1 pl-12">
          <button aria-label="Zoom out full"><ZoomIcon /></button>
          <button aria-label="Show spectral view" className="ml-7 flex h-[102px] w-[100px] items-center justify-center rounded-xl border-3 border-[#3a3a3a] bg-[#202020]">
            <svg className="h-[52px] w-[57px]" viewBox="0 0 57 52" fill="#123a5e" stroke="#2d8ceb" strokeWidth="4">
              <path d="M2 2h53v48H2zM2 10h53M2 25h53M2 33h53" />
            </svg>
          </button>
        </div>
      </div>

      <div className="mt-[61px] flex">
        <div className="min-w-0 flex-1 border-t-3 border-black">
          <Ruler labels={timeLabels} minor={[74, ...times.map((x) => x + 168)]} start={2782} end={3141} />
        </div>
        <div className="flex w-[317px] items-center gap-[45px] border-l-4 border-black pb-2 pl-[42px]">
          <MagnetIcon />
          <MarkerIcon />
        </div>
      </div>

      <div className="mr-[17px] border-t-3 border-r-4 border-b-3 border-black">
        <div className="flex">
          <div className="min-w-0 flex-1"><StereoWave times={times} /></div>
          <div className="flex w-[296px] border-l-4 border-black bg-[#2d2d2d]">
            <svg className="block h-[1972px] w-[150px]">
              <Decibels mid={490} top={0} />
              <Decibels mid={1473} top={985} />
              <path d="M0 981h150" stroke="#6a6a6a" strokeWidth="2" />
            </svg>
            <div className="flex flex-1 flex-col">
              <div className="flex h-[982px] items-center justify-end border-b-2 border-[#6a6a6a] pt-2 pr-2"><ChannelButton name="L" /></div>
              <div className="flex h-[982px] items-center justify-end pt-2 pr-2"><ChannelButton name="R" /></div>
            </div>
          </div>
        </div>
        <div className="flex h-9 items-center justify-end bg-[#3a3a3a] pr-[70px]">
          <svg className="h-3 w-6" viewBox="0 0 24 12"><path d="M0 12L12 0l12 12z" fill="#8a8a8a" /></svg>
        </div>
      </div>

      <div className="mt-[23px] flex h-[76px] items-center justify-end gap-7 pr-[282px]">
        <label htmlFor="zoom-mode">Zoom:</label>
        <Select id="zoom-mode" value="Independent" className="w-[506px]" />
      </div>

      <div className="mt-6 flex items-center">
        <div className="min-w-0 flex-1"><Overview muted /></div>
        <div className="flex w-[317px] pb-2 pl-12">
          <button aria-label="Zoom out full file"><ZoomIcon /></button>
        </div>
      </div>

      <div className="mt-[60px] flex">
        <div className="min-w-0 flex-1 border-t-3 border-black">
          <Ruler labels={fileLabels} minor={[57, 2826, 2942, 3054, 3171]} start={2898} end={3025} />
        </div>
        <div className="flex w-[317px] items-center gap-[45px] border-l-4 border-black pb-3 pl-[42px]">
          <MagnetIcon />
          <MarkerIcon />
        </div>
      </div>

      <div className="mr-[17px] flex border-t-3 border-r-4 border-black">
        <div className="min-w-0 flex-1"><FileWave /></div>
        <div className="flex w-[296px] border-l-4 border-black bg-[#2d2d2d]">
          <svg className="block h-[963px] w-[150px]"><Decibels mid={489} top={0} /></svg>
          <div className="flex flex-1 items-start justify-end pt-[457px] pr-2"><ChannelButton name="L" /></div>
        </div>
      </div>

      <NoiseReductionDialog />
      <GainHud />
      <Callouts />
    </main>
  );
}
